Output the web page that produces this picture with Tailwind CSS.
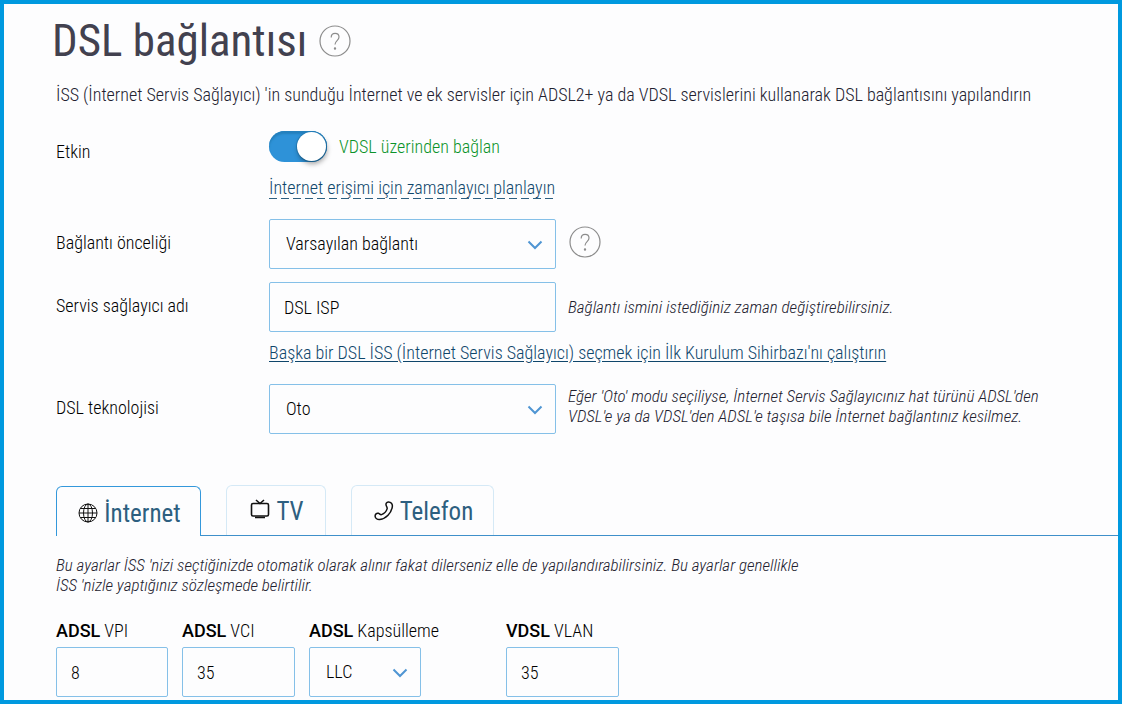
<!DOCTYPE html>
<html lang="tr">
<head>
    <meta charset="UTF-8">
    <meta name="viewport" content="width=device-width, initial-scale=1.0">
    <title>DSL bağlantısı</title>
    <!-- Tailwind CSS CDN -->
    <script src="https://cdn.jsdelivr.net/npm/@tailwindcss/browser@4"></script>
</head>
<body class="bg-[#fdfdfe] font-['Roboto_Condensed','Roboto',sans-serif] text-lg leading-6 font-light text-black">

<main class="min-h-screen border-4 border-[#0099df] pt-2 pb-[3px] pl-[52px]">

    <!-- Title -->
    <div class="flex items-center gap-3">
        <h1 class="-ml-1 text-[45px] leading-[58px] font-normal text-[#42414f]">DSL bağlantısı</h1>
        <button type="button" aria-label="Yardım" class="size-8">
            <svg class="size-8" viewBox="0 0 32 32" fill="none" stroke="#8c8c8c" stroke-width="1.2">
                <circle cx="16" cy="16" r="15" />
                <path d="M12.2 12.4c0-2.4 1.5-4 3.9-4s3.9 1.5 3.9 3.7c0 3.4-4 3.6-4 7.4" />
                <circle cx="16" cy="23.5" r="0.6" fill="#8c8c8c" />
            </svg>
        </button>
    </div>

    <p class="mt-[13px] text-[#22212f]">İSS (İnternet Servis Sağlayıcı) 'in sunduğu İnternet ve ek servisler için ADSL2+ ya da VDSL servislerini kullanarak DSL bağlantısını yapılandırın</p>

    <form>
        <div class="mt-6 grid grid-cols-[213px_1fr] gap-y-[13px]">
            <!-- Enabled -->
            <label for="enabled" class="pt-[9px]">Etkin</label>
            <div class="pb-1.5">
                <div class="flex items-center gap-3">
                    <span class="relative flex h-[31px] w-[58px]">
                        <input id="enabled" type="checkbox" checked class="h-[31px] w-[58px] appearance-none rounded-full bg-[#b5bcc4] checked:bg-[#2e92d8] shadow-[inset_0_3px_2px_#2480bd]">
                        <span class="pointer-events-none absolute top-px right-px size-[29px] rounded-full bg-white shadow-[1px_3px_5px_rgba(0,0,0,0.35),0_0_0_1px_#2480bd]"></span>
                    </span>
                    <span class="text-[#0b932a]">VDSL üzerinden bağlan</span>
                </div>
                <!-- Dashed rule under the link -->
                <a href="#" class="mt-[14px] inline-block h-[23px] bg-[repeating-linear-gradient(90deg,#2d5f80_0_8px,transparent_8px_12px)] bg-[length:100%_1px] bg-bottom bg-no-repeat text-[#0f466b]">İnternet erişimi için zamanlayıcı planlayın</a>
            </div>

            <!-- Priority -->
            <label for="priority" class="pt-3">Bağlantı önceliği</label>
            <div class="flex items-start gap-[13px]">
                <div class="relative w-[287px]">
                    <select id="priority" class="h-[50px] w-full appearance-none rounded-xs border border-[#85c0e8] bg-transparent pl-4">
                        <option>Varsayılan bağlantı</option>
                    </select>
                    <svg class="pointer-events-none absolute top-5 right-[13px] h-3 w-4" viewBox="0 0 16 12" fill="none" stroke="#4f95d3" stroke-width="2"><path d="M1.5 2.5 8 9l6.5-6.5" /></svg>
                </div>
                <button type="button" aria-label="Yardım" class="mt-[7px] size-8">
                    <svg class="size-8" viewBox="0 0 32 32" fill="none" stroke="#8c8c8c" stroke-width="1.2">
                        <circle cx="16" cy="16" r="15" />
                        <path d="M12.2 12.4c0-2.4 1.5-4 3.9-4s3.9 1.5 3.9 3.7c0 3.4-4 3.6-4 7.4" />
                        <circle cx="16" cy="23.5" r="0.6" fill="#8c8c8c" />
                    </svg>
                </button>
            </div>

            <!-- Provider -->
            <label for="provider" class="pt-3">Servis sağlayıcı adı</label>
            <div class="pb-1.5">
                <div class="flex items-center gap-3">
                    <input id="provider" type="text" value="DSL ISP" class="h-[50px] w-[287px] rounded-xs border border-[#85c0e8] px-[14px]">
                    <span class="text-[17px] italic text-[#22212f]">Bağlantı ismini istediğiniz zaman değiştirebilirsiniz.</span>
                </div>
                <a href="#" class="mt-[9px] inline-block text-[#0f466b] underline underline-offset-2">Başka bir DSL İSS (İnternet Servis Sağlayıcı) seçmek için İlk Kurulum Sihirbazı'nı çalıştırın</a>
            </div>

            <!-- Technology -->
            <label for="technology" class="pt-3">DSL teknolojisi</label>
            <div class="flex items-start gap-3">
                <div class="relative w-[287px] shrink-0">
                    <select id="technology" class="h-[50px] w-full appearance-none rounded-xs border border-[#85c0e8] bg-transparent pl-4">
                        <option>Oto</option>
                    </select>
                    <svg class="pointer-events-none absolute top-5 right-[13px] h-3 w-4" viewBox="0 0 16 12" fill="none" stroke="#4f95d3" stroke-width="2"><path d="M1.5 2.5 8 9l6.5-6.5" /></svg>
                </div>
                <p class="max-w-[490px] pt-0.5 text-[17px] leading-5 italic text-[#22212f]">Eğer 'Oto' modu seçiliyse, İnternet Servis Sağlayıcınız hat türünü ADSL'den VDSL'e ya da VDSL'den ADSL'e taşısa bile İnternet bağlantınız kesilmez.</p>
            </div>
        </div>

        <!-- Tabs -->
        <div role="tablist" class="mt-[51px] flex items-stretch text-[25px] font-normal text-[#2d5f80]">
            <button type="button" role="tab" aria-selected="true" class="mt-px flex h-[50px] w-[145px] items-center justify-center gap-1.5 rounded-t-md border border-b-0 border-[#3498db] pt-1 pl-0.5">
                <svg class="mb-0.5 size-5" viewBox="0 0 20 20" fill="none" stroke="#111" stroke-width="1">
                    <circle cx="10" cy="10" r="9" />
                    <ellipse cx="10" cy="10" rx="4.5" ry="9" />
                    <path d="M10 1v18M1 10h18M2.5 5.5h15M2.5 14.5h15" />
                </svg>
                İnternet
            </button>
            <div class="flex flex-1 gap-[25px] border-b border-[#3f90ca] pl-[25px]">
                <button type="button" role="tab" aria-selected="false" class="flex h-[50px] w-[100px] items-center justify-center gap-1.5 rounded-t-md border border-b-0 border-[#d5e9f6] pt-0.5 pl-0.5">
                    <svg class="mb-1.5 size-5" viewBox="0 0 20 20" fill="none" stroke="#111" stroke-width="1.6">
                        <rect x="1.5" y="4.5" width="17" height="12.5" rx="1.5" />
                        <path d="M6 1l4 3.5L14 1M5 18.5h10" />
                    </svg>
                    TV
                </button>
                <button type="button" role="tab" aria-selected="false" class="flex h-[50px] w-[143px] items-center justify-center gap-1.5 rounded-t-md border border-b-0 border-[#d5e9f6] pt-0.5 pl-0.5">
                    <svg class="mb-0.5 size-5" viewBox="0 0 20 20" fill="none" stroke="#111" stroke-width="1.5">
                        <path d="M12.2 4.4c-.7-1.8.4-3.3 2.1-3.4 2.6-.1 4.5 1.9 4 4.8-1 6.3-6.3 12-12.5 12.7-2.500.3-4.500-1.200-4.700-3.300-.1-2 1.500-3.400 3.300-2.900 1.600.5 1.700 1.800 3.100 1.300 2.500-.9 4.900-3.400 5.600-5.700.4-1.400-.5-1.800-.9-3.500z" />
                    </svg>
                    Telefon
                </button>
            </div>
        </div>

        <p class="mt-[19px] max-w-[762px] text-[17px] leading-5 italic text-[#22212f]">Bu ayarlar İSS 'nizi seçtiğinizde otomatik olarak alınır fakat dilerseniz elle de yapılandırabilirsiniz. Bu ayarlar genellikle İSS 'nizle yaptığınız sözleşmede belirtilir.</p>

        <!-- Line settings -->
        <div class="mt-6 flex gap-[14px]">
            <div class="w-[112px]">
                <label for="vpi" class="block whitespace-nowrap"><strong class="font-['Roboto',sans-serif] font-medium">ADSL</strong> VPI</label>
                <input id="vpi" type="text" value="8" class="mt-1 h-[50px] w-full rounded-xs border border-[#85c0e8] px-[14px]">
            </div>
            <div class="w-[113px]">
                <label for="vci" class="block whitespace-nowrap"><strong class="font-['Roboto',sans-serif] font-medium">ADSL</strong> VCI</label>
                <input id="vci" type="text" value="35" class="mt-1 h-[50px] w-full rounded-xs border border-[#85c0e8] px-[14px]">
            </div>
            <div class="w-[183px]">
                <label for="encapsulation" class="block whitespace-nowrap"><strong class="font-['Roboto',sans-serif] font-medium">ADSL</strong> Kapsülleme</label>
                <div class="relative mt-1 w-[112px]">
                    <select id="encapsulation" class="h-[50px] w-full appearance-none rounded-xs border border-[#85c0e8] bg-transparent pl-4">
                        <option>LLC</option>
                    </select>
                    <svg class="pointer-events-none absolute top-5 right-[13px] h-3 w-4" viewBox="0 0 16 12" fill="none" stroke="#4f95d3" stroke-width="2"><path d="M1.5 2.5 8 9l6.5-6.5" /></svg>
                </div>
            </div>
            <div class="w-[113px]">
                <label for="vlan" class="block whitespace-nowrap"><strong class="font-['Roboto',sans-serif] font-medium">VDSL</strong> VLAN</label>
                <input id="vlan" type="text" value="35" class="mt-1 h-[50px] w-full rounded-xs border border-[#85c0e8] px-[14px]">
            </div>
        </div>
    </form>
</main>

</body>
</html>
